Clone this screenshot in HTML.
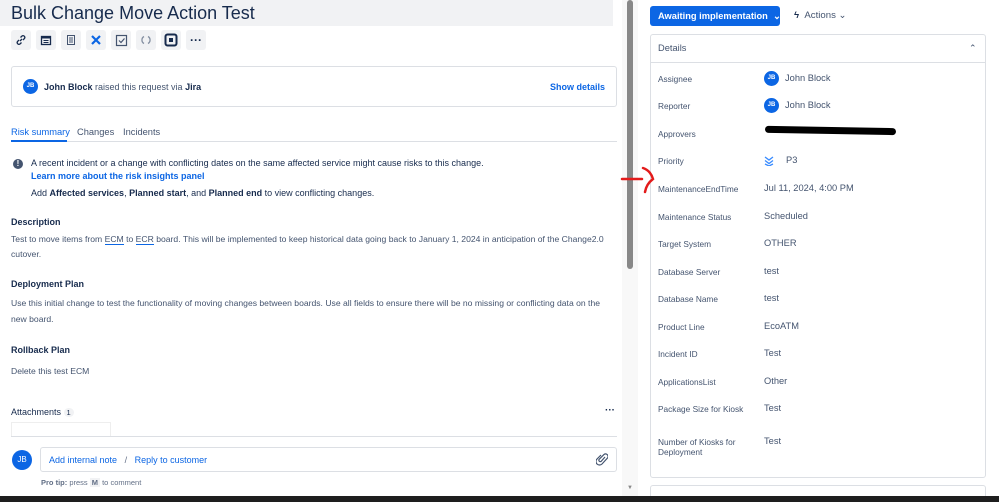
<!DOCTYPE html>
<html><head><meta charset="utf-8"><style>
*{margin:0;padding:0;box-sizing:border-box}
body{width:999px;height:502px;overflow:hidden;background:#fff;font-family:"Liberation Sans",sans-serif;color:#172b4d;position:relative;font-size:9.3px}
.a{position:absolute;white-space:nowrap}
.ic{position:absolute;top:30px;width:20px;height:20px;background:#f1f2f4;border-radius:3px;display:flex;align-items:center;justify-content:center}
.lbl{position:absolute;left:658px;font-size:8.3px;color:#44546f}
.val{position:absolute;left:764px;font-size:9.3px;color:#44546f}
.av{display:inline-block;width:15px;height:15px;border-radius:50%;background:#0c66e4;color:#fff;font-size:6px;text-align:center;line-height:15px;font-weight:bold;vertical-align:middle;margin-right:6px}
b{font-weight:bold}
.blue{color:#0c66e4}
</style></head><body>
<div class="a" style="left:0;top:0;width:613px;height:26px;background:#f1f2f4"></div>
<div class="a" style="left:11px;top:3px;font-size:18px;color:#172b4d">Bulk Change Move Action Test</div>

<div class="ic" style="left:11px"><svg width="12" height="12" viewBox="0 0 12 12"><path d="M5 7l2-2M4 6L2.5 7.5a1.8 1.8 0 0 0 2.5 2.5L6.5 8.5M8 6l1.5-1.5A1.8 1.8 0 0 0 7 2L5.5 3.5" stroke="#172b4d" stroke-width="1.3" fill="none"/></svg></div>
<div class="ic" style="left:36px"><svg width="12" height="12"><rect x="1.5" y="2.5" width="9" height="8" fill="none" stroke="#172b4d" stroke-width="1.3"/><rect x="1.5" y="2.5" width="9" height="2" fill="#172b4d"/><path d="M3.5 6.5h5M3.5 8.5h5" stroke="#172b4d"/></svg></div>
<div class="ic" style="left:61px"><svg width="12" height="12"><rect x="2.5" y="1.5" width="7" height="9" fill="none" stroke="#44546f"/><path d="M4 4h4M4 6h4M4 8h4" stroke="#44546f"/></svg></div>
<div class="ic" style="left:86px"><svg width="12" height="12"><path d="M2 2l4 4 4-4M2 10l4-4 4 4" stroke="#0c66e4" stroke-width="2.2" fill="none"/></svg></div>
<div class="ic" style="left:111px"><svg width="13" height="13"><rect x="1.5" y="1.5" width="10" height="10" fill="none" stroke="#44546f" stroke-width="1.2"/><path d="M4 6.5l2 2 3.5-4" stroke="#44546f" stroke-width="1.2" fill="none"/></svg></div>
<div class="ic" style="left:136px"><svg width="12" height="12"><path d="M4 2.5A4 4 0 0 0 4 9.5M8 2.5A4 4 0 0 1 8 9.5" stroke="#8590a2" stroke-width="1.3" fill="none"/></svg></div>
<div class="ic" style="left:161px"><svg width="14" height="14"><rect x="1.5" y="1.5" width="11" height="11" rx="2" fill="none" stroke="#172b4d" stroke-width="2"/><rect x="5" y="5" width="4" height="4" fill="#172b4d"/></svg></div>
<div class="ic" style="left:186px;font-weight:bold;font-size:12px;line-height:10px">···</div>

<div class="a" style="left:11px;top:66px;width:606px;height:41px;border:1px solid #dcdfe4;border-radius:3px"></div>
<div class="a" style="left:23px;top:79px"><span class="av">JB</span></div>
<div class="a" style="left:44px;top:82px;font-size:9px;color:#44546f"><b style="color:#172b4d">John Block</b> raised this request via <b style="color:#172b4d">Jira</b></div>
<div class="a blue" style="left:550px;top:82px;font-size:9px;font-weight:bold">Show details</div>

<div class="a blue" style="left:11px;top:127px;font-size:9.3px">Risk summary</div>
<div class="a" style="left:77px;top:127px;font-size:9.3px;color:#44546f">Changes</div>
<div class="a" style="left:123px;top:127px;font-size:9.3px;color:#44546f">Incidents</div>
<div class="a" style="left:11px;top:141px;width:606px;height:1px;background:#dcdfe4"></div>
<div class="a" style="left:11px;top:140px;width:56px;height:2px;background:#0c66e4"></div>

<div class="a" style="left:13px;top:159px;width:10px;height:10px;border-radius:50%;background:#44546f;color:#fff;font-size:8px;text-align:center;line-height:10px;font-weight:bold">!</div>
<div class="a" style="left:31px;top:158px;font-size:9px;color:#172b4d">A recent incident or a change with conflicting dates on the same affected service might cause risks to this change.</div>
<div class="a blue" style="left:31px;top:171px;font-size:9px;font-weight:bold">Learn more about the risk insights panel</div>
<div class="a" style="left:31px;top:188px;font-size:9px">Add <b>Affected services</b>, <b>Planned start</b>, and <b>Planned end</b> to view conflicting changes.</div>

<div class="a" style="left:11px;top:217px;font-size:9px;font-weight:bold">Description</div>
<div class="a" style="left:11px;top:234px;font-size:8.6px;color:#44546f">Test to move items from <span style="border-bottom:1px solid #0c66e4">ECM</span> to <span style="border-bottom:1px solid #0c66e4">ECR</span> board. This will be implemented to keep historical data going back to January 1, 2024 in anticipation of the Change2.0</div>
<div class="a" style="left:11px;top:249px;font-size:8.6px;color:#44546f">cutover.</div>
<div class="a" style="left:11px;top:279px;font-size:9px;font-weight:bold">Deployment Plan</div>
<div class="a" style="left:11px;top:298px;font-size:8.6px;color:#44546f">Use this initial change to test the functionality of moving changes between boards. Use all fields to ensure there will be no missing or conflicting data on the</div>
<div class="a" style="left:11px;top:314px;font-size:8.6px;color:#44546f">new board.</div>
<div class="a" style="left:11px;top:345px;font-size:9px;font-weight:bold">Rollback Plan</div>
<div class="a" style="left:11px;top:366px;font-size:8.6px;color:#44546f">Delete this test ECM</div>

<div class="a" style="left:11px;top:407px;font-size:9px">Attachments <span style="display:inline-block;background:#f1f2f4;border-radius:6px;padding:0 3px;font-size:7.5px">1</span></div>
<div class="a" style="left:605px;top:405px;font-size:10px;font-weight:bold">···</div>
<div class="a" style="left:11px;top:422px;width:100px;height:14px;border:1px solid #eee;border-bottom:none"></div>
<div class="a" style="left:11px;top:436px;width:606px;height:1px;background:#dcdfe4"></div>
<div class="a" style="left:12px;top:450px;width:20px;height:20px;border-radius:50%;background:#0c66e4;color:#fff;font-size:8px;text-align:center;line-height:20px">JB</div>
<div class="a" style="left:40px;top:447px;width:577px;height:25px;border:1px solid #dcdfe4;border-radius:3px"></div>
<div class="a blue" style="left:49px;top:455px;font-size:9px">Add internal note &nbsp;&nbsp;<span style="color:#626f86">/</span>&nbsp;&nbsp; Reply to customer</div>
<div class="a" style="left:596px;top:452px"><svg width="12" height="14" viewBox="0 0 12 14"><path d="M9 5L5 9.5a1.5 1.5 0 0 1-2-2L8 2.5a2.5 2.5 0 0 1 3.5 3.5L6 12a3.5 3.5 0 0 1-5-5L5 3" stroke="#44546f" stroke-width="1.2" fill="none"/></svg></div>
<div class="a" style="left:41px;top:478px;font-size:7.5px;color:#626f86"><b>Pro tip:</b> press <span style="background:#f1f2f4;padding:0 2px;font-weight:bold">M</span> to comment</div>

<div class="a" style="left:622px;top:0;width:16px;height:496px;background:#f8f8f8"></div>
<div class="a" style="left:627px;top:0;width:6px;height:269px;background:#888;border-radius:3px"></div>
<div class="a" style="left:627px;top:485px;font-size:6px;color:#888">▼</div>

<div class="a" style="left:650px;top:6px;width:130px;height:20px;background:#0c66e4;border-radius:3px;color:#fff;font-size:9.3px;font-weight:bold;padding:5px 0 0 8px">Awaiting implementation &nbsp;⌄</div>
<div class="a" style="left:794px;top:10px;font-size:9.6px;color:#44546f"><b style="color:#172b4d">ϟ</b>&nbsp; Actions ⌄</div>

<div class="a" style="left:650px;top:34px;width:336px;height:444px;border:1px solid #dcdfe4;border-radius:3px"></div>
<div class="a" style="left:650px;top:62px;width:336px;height:1px;background:#dcdfe4"></div>
<div class="a" style="left:658px;top:43px;font-size:9.3px;color:#44546f">Details</div>
<div class="a" style="left:969px;top:43px;font-size:9px;color:#44546f">⌃</div>

<div class="lbl" style="top:74px">Assignee</div><div class="val" style="top:71px;color:#44546f"><span class="av">JB</span>John Block</div>
<div class="lbl" style="top:101px">Reporter</div><div class="val" style="top:98px;color:#44546f"><span class="av">JB</span>John Block</div>
<div class="lbl" style="top:129px">Approvers</div>
<div class="a" style="left:765px;top:127px;width:131px;height:7px;background:#000;border-radius:4px;transform:rotate(1deg)"></div>
<div class="lbl" style="top:156px">Priority</div><div class="val" style="top:155px"><svg width="10" height="10" style="vertical-align:middle;margin-right:12px"><path d="M1 1l4 3 4-3M1 4.5l4 3 4-3M1 8l4 2 4-2" stroke="#388bff" stroke-width="1.3" fill="none"/></svg>P3</div>
<div class="lbl" style="top:184px">MaintenanceEndTime</div><div class="val" style="top:183px">Jul 11, 2024, 4:00 PM</div>
<div class="lbl" style="top:212px">Maintenance Status</div><div class="val" style="top:211px">Scheduled</div>
<div class="lbl" style="top:239px">Target System</div><div class="val" style="top:238px">OTHER</div>
<div class="lbl" style="top:267px">Database Server</div><div class="val" style="top:266px">test</div>
<div class="lbl" style="top:294px">Database Name</div><div class="val" style="top:293px">test</div>
<div class="lbl" style="top:322px">Product Line</div><div class="val" style="top:321px">EcoATM</div>
<div class="lbl" style="top:349px">Incident ID</div><div class="val" style="top:348px">Test</div>
<div class="lbl" style="top:377px">ApplicationsList</div><div class="val" style="top:376px">Other</div>
<div class="lbl" style="top:404px">Package Size for Kiosk</div><div class="val" style="top:403px">Test</div>
<div class="lbl" style="top:437px;line-height:10px">Number of Kiosks for<br>Deployment</div><div class="val" style="top:436px">Test</div>
<div class="a" style="left:650px;top:485px;width:336px;height:15px;border:1px solid #dcdfe4;border-radius:3px"></div>

<svg class="a" style="left:620px;top:164px" width="40" height="30"><path d="M2 15h20M23 4c6 2 9 7 10 11c-4 3-7 7-8 13" stroke="#e31b1b" stroke-width="2.5" fill="none" stroke-linecap="round"/></svg>

<div class="a" style="left:0;top:496px;width:999px;height:6px;background:#1e1e1e"></div>
</body></html>
